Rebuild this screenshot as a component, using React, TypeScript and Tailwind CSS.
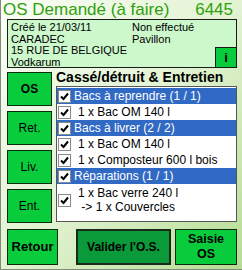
import React from 'react'

const font = { fontFamily: '"Liberation Sans", Arial, sans-serif' }
const narrow = { fontFamily: '"Liberation Sans Narrow", "Liberation Sans", sans-serif' }

type Row = { text: string; header?: boolean; lines?: string[] }

const rows: Row[] = [
  { text: 'Bacs à reprendre (1 / 1)', header: true },
  { text: '1 x Bac OM 140 l' },
  { text: 'Bacs à livrer (2 / 2)', header: true },
  { text: '1 x Bac OM 140 l' },
  { text: '1 x Composteur 600 l bois' },
  { text: 'Réparations (1 / 1)', header: true },
  { text: '', lines: ['1 x Bac verre 240 l', ' -> 1 x Couvercles'] },
]

function Check() {
  return (
    <div className="w-[13px] h-[13px] shrink-0 bg-white border border-[#8a8a8a] flex items-center justify-center">
      <svg width="9" height="9" viewBox="0 0 9 9">
        <path d="M1 4.5 L3.5 7 L8 1.5" stroke="#000" strokeWidth="2" fill="none" />
      </svg>
    </div>
  )
}

function SideButton({ label, bold }: { label: string; bold?: boolean }) {
  return (
    <div
      className={`h-[34px] w-[45px] bg-[#08cc3c] border border-[#0a2a0a] flex items-center justify-center text-[12px] text-black ${bold ? 'font-bold' : ''}`}
    >
      {label}
    </div>
  )
}

export default function App() {
  return (
    <div
      className="w-[242px] h-[270px] overflow-hidden border-l border-b border-[#7f8a78] bg-gradient-to-br from-[#fbfef8] via-[#e2f3d2] to-[#b6dc94] text-black"
      style={font}
    >
      <div className="flex justify-between items-center h-[19px] pl-[2px] pr-[9px]">
        <span className="text-[17px] leading-[19px] text-[#2ea00c]">OS Demandé (à faire)</span>
        <span className="text-[17px] leading-[19px] text-[#2ea00c]">6445</span>
      </div>

      <div className="ml-[6px] mr-[5px] h-[49px] bg-[#ccf8cc] border border-[#1a1a1a] flex">
        <div
          className="flex-1 pl-[3px] pt-[2px] text-[11px] leading-[11.5px] grid grid-cols-[121px_1fr] content-start"
          style={narrow}
        >
          <span>Créé le 21/03/11</span>
          <span>Non effectué</span>
          <span>CARADEC</span>
          <span>Pavillon</span>
          <span className="col-span-2">15 RUE DE BELGIQUE</span>
          <span className="col-span-2">Vodkarum</span>
        </div>
        <div className="self-end w-[21px] h-[20px] bg-[#08cc3c] border-l border-t border-[#1a1a1a] flex items-center justify-center text-[13px] font-bold">
          i
        </div>
      </div>

      <div className="flex ml-[6px] mr-[5px]">
        <div className="flex flex-col gap-[5px] pt-[4px]">
          <SideButton label="OS" bold />
          <SideButton label="Ret." />
          <SideButton label="Liv." />
          <SideButton label="Ent." />
        </div>
        <div className="flex-1 ml-[4px] flex flex-col">
          <div className="h-[18px] text-[14px] font-bold leading-[18px] whitespace-nowrap">Cassé/détruit &amp; Entretien</div>
          <div className="h-[136px] bg-white border border-[#555] pt-[1px] text-[12px]">
            {rows.map((r, i) =>
              r.header ? (
                <div key={i} className="h-[16px] bg-[#316ac5] text-white flex items-center pl-[1px] gap-[3px]">
                  <Check />
                  <span className="leading-[16px] whitespace-nowrap">{r.text}</span>
                </div>
              ) : r.lines ? (
                <div key={i} className="h-[32px] flex items-center pl-[1px] gap-[7px]">
                  <Check />
                  <div className="leading-[14px] whitespace-pre">
                    <div>{r.lines[0]}</div>
                    <div>{r.lines[1]}</div>
                  </div>
                </div>
              ) : (
                <div key={i} className="h-[16px] flex items-center pl-[1px] gap-[7px]">
                  <Check />
                  <span className="leading-[16px] whitespace-nowrap">{r.text}</span>
                </div>
              )
            )}
          </div>
        </div>
      </div>

      <div className="flex items-center ml-[6px] mr-[5px] mt-[6px]">
        <div className="w-[51px] h-[36px] bg-[#08cc3c] border border-[#0a2a0a] flex items-center justify-center text-[13px] font-bold">
          Retour
        </div>
        <div className="ml-[18px] w-[95px] h-[36px] bg-[#0a9a3a] border-2 border-[#1a2a1a] flex items-center justify-center text-[12px] font-bold whitespace-nowrap">
          Valider l'O.S.
        </div>
        <div className="ml-[4px] flex-1 h-[36px] bg-[#08cc3c] border border-[#0a2a0a] flex flex-col items-center justify-center text-[12.5px] font-bold leading-[15px]">
          <span>Saisie</span>
          <span>OS</span>
        </div>
      </div>
    </div>
  )
}
